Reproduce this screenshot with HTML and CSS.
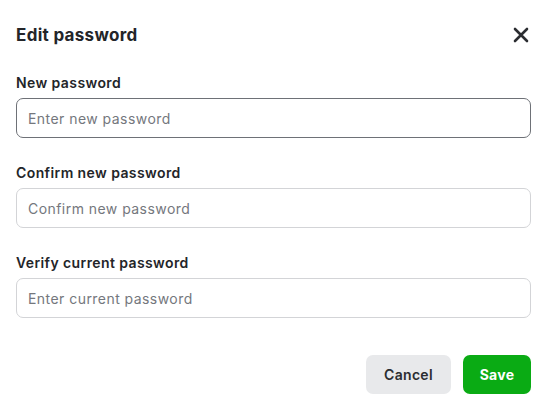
FILE: index.html
```html
<!DOCTYPE html>
<html>
<head>
<meta charset="utf-8">
<link rel="stylesheet" href="styles.css">
</head>
<body>
<div class="modal">
  <div class="header">
    <h1 class="title">Edit password</h1>
    <button class="close" aria-label="Close">
      <svg width="16" height="16" viewBox="0 0 16 16"><path d="M2 2 L14 14 M14 2 L2 14" stroke="#2b2d31" stroke-width="2.6" stroke-linecap="round"/></svg>
    </button>
  </div>
  <div class="fields">
    <label class="field">
      <span class="label">New password</span>
      <input class="input focused" type="password" placeholder="Enter new password">
    </label>
    <label class="field">
      <span class="label">Confirm new password</span>
      <input class="input" type="password" placeholder="Confirm new password">
    </label>
    <label class="field">
      <span class="label">Verify current password</span>
      <input class="input" type="password" placeholder="Enter current password">
    </label>
  </div>
  <div class="actions">
    <button class="btn cancel">Cancel</button>
    <button class="btn save">Save</button>
  </div>
</div>
</body>
</html>
```
FILE: styles.css
```css
* { box-sizing: border-box; }
html, body { margin: 0; padding: 0; background: #fff; }
body { font-family: Inter, "Noto Sans", sans-serif; color: #232529; }
.modal { width: 549px; height: 411px; padding: 23px 18px 0 16px; display: flex; flex-direction: column; }
.header { display: flex; justify-content: space-between; align-items: center; height: 24px; }
.title { margin: 0; font-size: 17px; font-weight: 700; line-height: 24px; letter-spacing: 0.3px; }
.close { border: 0; background: none; padding: 0; width: 16px; height: 16px; margin-right: 2px; display: flex; cursor: pointer; }
.fields { display: flex; flex-direction: column; gap: 25px; margin-top: 26px; }
.field { display: flex; flex-direction: column; gap: 5px; }
.label { font-size: 14px; font-weight: 600; line-height: 20px; color: #232529; letter-spacing: 0.4px; }
.input { width: 515px; height: 40px; border: 1px solid #d3d4d7; border-radius: 7px; padding: 0 11px; font-family: Inter, sans-serif; font-size: 14px; color: #232529; outline: none; background: #fff; letter-spacing: 0.45px; }
.input.focused { border-color: #6e7177; }
.input::placeholder { color: #74777d; }
.actions { display: flex; justify-content: flex-end; gap: 12px; margin-top: 37px; }
.btn { height: 39px; border: 0; border-radius: 7px; font-family: Inter, sans-serif; font-size: 14px; font-weight: 600; cursor: pointer; letter-spacing: 0.3px; }
.cancel { width: 85px; background: #e8e9eb; color: #2b2d31; }
.save { width: 68px; background: #0aab14; color: #fff; font-weight: 700; }
```
